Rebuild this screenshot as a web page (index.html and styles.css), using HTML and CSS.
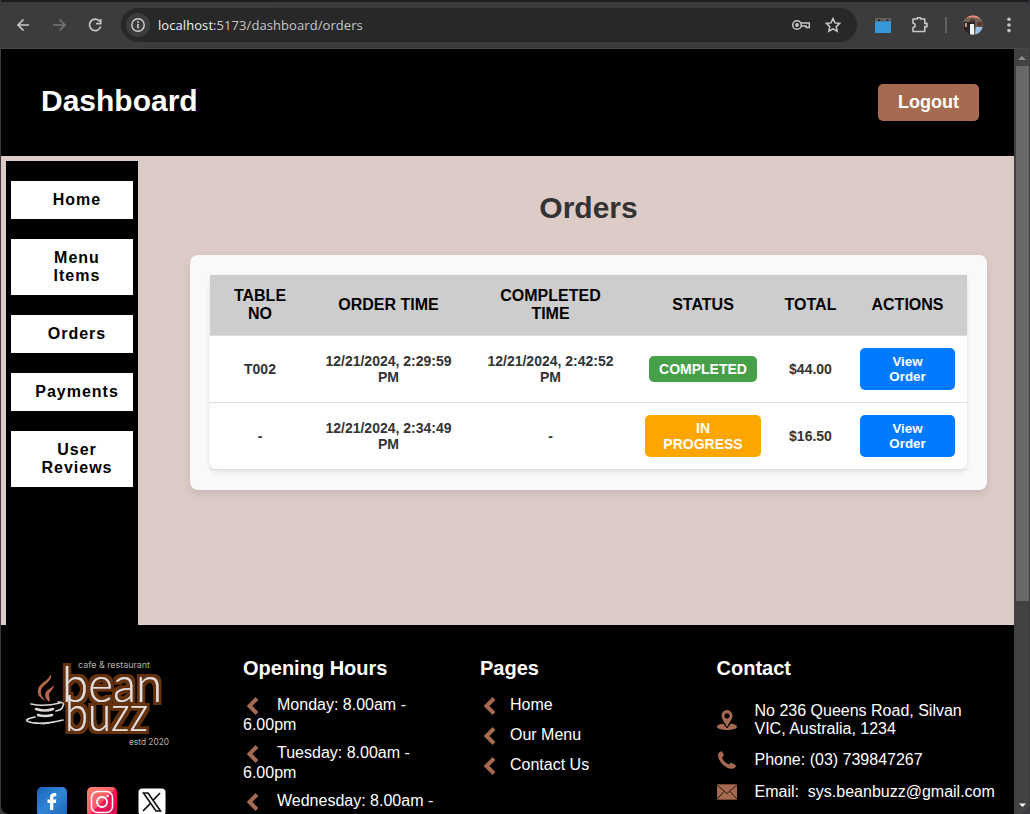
FILE: index.html
```html
<!DOCTYPE html>
<html lang="en">
<head>
<meta charset="utf-8">
<title>Dashboard - Orders</title>
<link rel="stylesheet" href="styles.css">
</head>
<body>
<div class="window">
  <div class="tabstrip"><span class="tab-edge"></span></div>
  <div class="toolbar">
    <svg class="nav-icons" width="120" height="46" viewBox="0 0 120 46" fill="none" stroke-width="1.7">
      <path d="M28 23H17M22.500 17.500L17 23l5.500 5.500" stroke="#c7c7c7"/>
      <path d="M52 23h12M58.500 17.500L64 23l-5.500 5.500" stroke="#757575"/>
      <path d="M98.800 19.500A5.700 5.700 0 1 0 99.700 24.500M99.700 17v4.600h-4.600" stroke="#c7c7c7"/>
    </svg>
    <div class="address">
      <span class="info"><svg width="24" height="24" viewBox="0 0 24 24" fill="none" stroke="#d0d0d0" stroke-width="1.4"><circle cx="12" cy="12" r="6.200"/><path d="M12 11v4.300M12 8.300v1.700" stroke-width="1.600"/></svg></span>
      <span class="url"><b>localhost</b>:5173/dashboard/orders</span>
      <svg class="address-icons" width="56" height="24" viewBox="0 0 56 24" fill="none" stroke="#c7c7c7" stroke-width="1.500">
        <circle cx="9" cy="12" r="4.300"/><circle cx="9" cy="12" r="1.900" fill="#c7c7c7" stroke="none"/><path d="M12.700 10h8.600v4.600h-3.200v-1.700h-5"/>
        <path d="M45 5.600l2 4.300 4.700.5-3.500 3.200 1 4.600-4.200-2.400-4.200 2.400 1-4.600-3.500-3.200 4.700-.5z" stroke-width="1.500"/>
      </svg>
    </div>
    <svg class="ext-icons" width="172" height="46" viewBox="0 0 172 46">
      <path fill="#606060" d="M18 16h16v5H18z"/><path fill="#3498db" d="M18 19.600h16V31H18z"/><path fill="#222" d="M21 17.500h2v1.500h-2zM29.500 17.500h2v1.500h-2z"/>
      <path d="M56 17h4.300v-1.200h3.300V17h4.200v4.400H70v3.200h-2.200V29.500H56v-4a2 2 0 0 0 0-4.300z" fill="none" stroke="#c7c7c7" stroke-width="1.600" stroke-linejoin="round"/>
      <path fill="#606060" d="M88 15h2v16h-2z"/>
      <clipPath id="avatar"><circle cx="116" cy="23" r="9.800"/></clipPath>
      <g clip-path="url(#avatar)"><path fill="#eb8c7c" d="M106 13h20v7h-20z"/><path fill="#706252" d="M106 17q10-4 20 1v15h-20z"/><path fill="#252326" d="M107 20h7l-1 13h-7zM113 18h5v7h-5z"/><circle cx="115.500" cy="18.500" r="2" fill="#553b34"/><circle cx="122.500" cy="22" r="2.600" fill="#593931"/><path fill="#edf1f4" d="M113 22h4v11h-4z"/><path fill="#98bce8" d="M119 25h7v8h-8z"/><path fill="#c99376" d="M108 21h2v4h-2z"/></g>
      <g fill="#c7c7c7"><circle cx="152" cy="17.300" r="1.800"/><circle cx="152" cy="23" r="1.800"/><circle cx="152" cy="28.600" r="1.800"/></g>
    </svg>
  </div>
  <div class="viewport">
    <div class="page">
      <header class="header"><h1>Dashboard</h1><button class="logout">Logout</button></header>
      <div class="body">
        <nav class="sidebar">
          <a>Home</a><a>Menu<br>Items</a><a>Orders</a><a>Payments</a><a>User<br>Reviews</a>
        </nav>
        <main class="main">
          <h2>Orders</h2>
          <section class="card">
            <table>
              <colgroup><col class="c-no"><col class="c-order"><col class="c-done"><col class="c-status"><col class="c-total"><col class="c-action"></colgroup>
              <thead><tr><th>TABLE<br>NO</th><th>ORDER TIME</th><th>COMPLETED<br>TIME</th><th>STATUS</th><th>TOTAL</th><th>ACTIONS</th></tr></thead>
              <tbody>
                <tr><td>T002</td><td>12/21/2024, 2:29:59<br>PM</td><td>12/21/2024, 2:42:52<br>PM</td><td><span class="badge done">COMPLETED</span></td><td>$44.00</td><td><button class="view">View<br>Order</button></td></tr>
                <tr><td>-</td><td>12/21/2024, 2:34:49<br>PM</td><td>-</td><td><span class="badge progress">IN<br>PROGRESS</span></td><td>$16.50</td><td><button class="view">View<br>Order</button></td></tr>
              </tbody>
            </table>
          </section>
        </main>
      </div>
      <footer class="footer">
        <div class="brand">
          <svg class="logo" width="160" height="100" viewBox="20 653 160 100">
            <defs><filter id="glow" filterUnits="userSpaceOnUse" x="55" y="650" width="120" height="95"><feMorphology in="SourceAlpha" operator="dilate" radius="2.600" result="wide"/><feGaussianBlur in="wide" stdDeviation=".5" result="soft"/><feFlood flood-color="#65330f"/><feComposite in2="soft" operator="in" result="edge"/><feMerge><feMergeNode in="edge"/><feMergeNode in="SourceGraphic"/></feMerge></filter></defs>
            <text class="logo-small" x="78" y="668" textLength="72" lengthAdjust="spacingAndGlyphs">cafe &amp; restaurant</text>
            <g class="logo-word" filter="url(#glow)"><text x="62" y="702" textLength="100" lengthAdjust="spacingAndGlyphs">bean</text><text x="65" y="731" textLength="83" lengthAdjust="spacingAndGlyphs">buzz</text></g>
            <text class="logo-small" x="129" y="745" textLength="40" lengthAdjust="spacingAndGlyphs">estd 2020</text>
            <g fill="#b9694b"><path d="M51 674c2 7-8 10-10 16-1 5 2 8 5 11-7-3-10-8-7-14 3-5 10-7 12-13z"/><path d="M54 685c0 5-5 6-5 10 0 3 2 4 0 7-3-3-5-6-3-10 2-3 6-4 8-7z"/></g>
            <g fill="none" stroke="#ddd8d4" stroke-linecap="round"><path d="M31 704q13 3 29-1" stroke-width="1.600"/><path d="M58 702q7 0 5 4-1 4-7 5" stroke-width="1.600"/><path d="M36 709q9 3 17 0M38 715q7 2 14 0" stroke-width="2.600"/><path d="M35 717q-10 2-8 4 10 5 36-1" stroke-width="1.700"/><path d="M36 723q9 2 18-1" stroke-width="1.200"/></g>
          </svg>
          <div class="socials">
            <svg width="30" height="30" viewBox="0 0 30 30"><defs><linearGradient id="fb" x2="1" y2="1"><stop stop-color="#1765bc"/><stop offset=".5" stop-color="#3384d5"/><stop offset="1" stop-color="#1c65b8"/></linearGradient></defs><rect width="30" height="30" rx="5" fill="url(#fb)"/><path fill="#fff" d="M13 23v-7h-2.500v-3.500H13v-2c0-3 1.600-4.500 4.300-4.500h2v3.300h-1.500c-1.200 0-1.500.6-1.500 1.600v1.600h3l-.5 3.500h-2.500v7z"/></svg>
            <svg width="30" height="30" viewBox="0 0 30 30"><defs><linearGradient id="ig" x1="0" y1="0" x2="1" y2="1"><stop stop-color="#ff8370"/><stop offset=".49" stop-color="#ff5969"/><stop offset=".51" stop-color="#f51456"/><stop offset="1" stop-color="#d70a53"/></linearGradient></defs><rect width="30" height="30" rx="5" fill="url(#ig)"/><g fill="none" stroke="#fff" stroke-width="1.500"><rect x="4.500" y="4.500" width="21" height="21" rx="6"/><circle cx="15" cy="15" r="5" stroke-width="1.900"/></g><circle cx="20.700" cy="9" r="1.200" fill="#fff"/></svg>
            <svg width="30" height="30" viewBox="0 0 30 30"><rect x="1.500" y="1.500" width="27" height="27" rx="4" fill="#fff"/><path d="M6.500 6H11L23.500 24H19z" fill="#fff" stroke="#111" stroke-width="1.600"/><path d="M23 6l-7 7.500M13.500 16.300L6 24" stroke="#111" stroke-width="1.700"/></svg>
          </div>
        </div>
        <div class="hours"><h3>Opening Hours</h3>
          <p><svg class="chev" width="14" height="18" viewBox="0 0 14 18"><path d="M11 1.500L3.500 9l7.500 7.500"/></svg>Monday: 8.00am -<br>6.00pm</p>
          <p><svg class="chev" width="14" height="18" viewBox="0 0 14 18"><path d="M11 1.500L3.500 9l7.500 7.500"/></svg>Tuesday: 8.00am -<br>6.00pm</p>
          <p><svg class="chev" width="14" height="18" viewBox="0 0 14 18"><path d="M11 1.500L3.500 9l7.500 7.500"/></svg>Wednesday: 8.00am -</p>
        </div>
        <div class="links"><h3>Pages</h3>
          <a><svg class="chev" width="14" height="18" viewBox="0 0 14 18"><path d="M11 1.500L3.500 9l7.500 7.500"/></svg>Home</a>
          <a><svg class="chev" width="14" height="18" viewBox="0 0 14 18"><path d="M11 1.500L3.500 9l7.500 7.500"/></svg>Our Menu</a>
          <a><svg class="chev" width="14" height="18" viewBox="0 0 14 18"><path d="M11 1.500L3.500 9l7.500 7.500"/></svg>Contact Us</a>
        </div>
        <div class="contact"><h3>Contact</h3>
          <div class="row address-row"><svg width="20" height="20" viewBox="0 0 20 20" fill="#a66a50"><path d="M4 14l2.500-.6L10 18l3.500-4.600C18 14 20 15.300 20 16.700 20 18.600 15.500 20 10 20S0 18.600 0 16.700C0 15.500 1.500 14.500 4 14z"/><path fill-rule="evenodd" d="M10 0a5.500 5.500 0 0 1 5.500 5.600C15.500 9 12 13 10 17.500 8 13 4.500 9 4.500 5.600A5.500 5.500 0 0 1 10 0zm0 3.200a2.600 2.600 0 1 0 0 5.200 2.600 2.600 0 0 0 0-5.200z"/><path d="M5.800 12.500L10 18l4.200-5.500" fill="none" stroke="#000" stroke-width=".8"/></svg><span>No 236 Queens Road, Silvan<br>VIC, Australia, 1234</span></div>
          <div class="row"><svg width="20" height="20" viewBox="0 0 20 20" fill="#a66a50"><path d="M2 2.500L5 1l2 4.500-2 2c1 3 4 6 7 7l2-2 4.800 2.800c.5 1.500-1.300 3.200-3.300 3.500C8 19 1 11 1 5c0-1 .3-2 1-2.500z"/></svg><span>Phone: (03) 739847267</span></div>
          <div class="row"><svg width="20" height="16" viewBox="0 0 20 16"><path fill="#a66a50" d="M0 .3h20v15.400H0z"/><path d="M0 1l10 8.500L20 1M0 15l7-7.500M20 15l-7-7.500" fill="none" stroke="#211510"/></svg><span>Email:&nbsp; sys.beanbuzz@gmail.com</span></div>
        </div>
      </footer>
    </div>
    <div class="scrollbar"><svg width="15" height="17" viewBox="0 0 15 17"><path fill="#8c8c8c" d="M8 7l4 4H4z"/></svg><div class="thumb"></div><svg width="15" height="17" viewBox="0 0 15 17"><path fill="#fff" d="M5 6.500h7l-3.500 3.500z"/></svg></div>
  </div>
</div>
</body>
</html>
```
FILE: styles.css
```css
* { box-sizing: border-box; }
body { margin: 0; background: #3a3b3e; font-family: "Liberation Sans", Arial, sans-serif; }
h1, h2, h3, p { margin: 0; }
svg { display: block; flex: none; }
button { border: 0; font-family: inherit; font-weight: bold; color: #fff; }
.window { width: 1030px; height: 814px; padding: 0 1px; overflow: hidden; display: flex; flex-direction: column; }
.tabstrip { height: 2px; flex: none; background: #202020; display: flex; }
.tab-edge { width: 274px; background: #1d1d1d; }
.toolbar { height: 47px; flex: none; display: flex; align-items: flex-start; background: #3c3c3c; border-bottom: 1px solid #4a4a4a; border-radius: 7px 7px 0 0; }
.address { width: 736px; flex: none; height: 34px; margin-top: 6px; padding: 0 13px 0 5px; border-radius: 17px; background: #282828; display: flex; align-items: center; }
.info { width: 24px; height: 24px; border-radius: 50%; background: #3c3c3c; }
.url { margin-left: 8px; font: 13px/20px "Open Sans", "Noto Sans", sans-serif; letter-spacing: .07px; color: #c7c7c7; white-space: nowrap; }
.url b { font-weight: normal; color: #eee; }
.address-icons { margin-left: auto; }
.viewport { height: 765px; display: flex; background: #000; border-radius: 0 0 7px 7px; overflow: hidden; }
.page { width: 1013px; height: 765px; overflow: hidden; background: #ddcbc8; }
.header { height: 107px; padding: 0 35px 0 40px; background: #000; display: flex; justify-content: space-between; align-items: center; }
.header h1 { font-size: 30px; line-height: 34px; color: #fff; margin-bottom: 3px; }
.logout { width: 101px; height: 37px; font-size: 18px; border-radius: 5px; background: #a66a50; padding: 0; }
.body { height: 469px; display: flex; }
.sidebar { width: 132px; margin: 5px 0 0 5px; padding: 20px 5px 0; background: #000; display: flex; flex-direction: column; gap: 20px; }
.sidebar a { padding: 10px 0 10px 10px; background: #fff; color: #000; font-weight: bold; font-size: 16px; line-height: 18px; letter-spacing: 1px; text-align: center; }
.main { width: 797px; margin-left: 52px; padding-top: 34px; }
.main h2 { font-size: 30px; line-height: 35px; color: #333; text-align: center; margin-bottom: 30px; }
.card { height: 235px; padding: 20px; background: #f9f9f9; border-radius: 8px; box-shadow: 0 4px 8px rgba(0,0,0,.1); }
table { width: 757px; table-layout: fixed; border-collapse: separate; border-spacing: 0; background: #fff; border-radius: 8px; box-shadow: 0 2px 5px rgba(0,0,0,.1); }
.c-no { width: 100px; }
.c-order { width: 157px; }
.c-done { width: 167px; }
.c-status { width: 138px; }
.c-total { width: 76px; }
.c-action { width: 119px; }
th, td { padding: 12px 0; text-align: center; vertical-align: middle; border-bottom: 1px solid #ddd; font-weight: bold; }
th { height: 61px; font-size: 16px; line-height: 18px; background: #cdcdcd; color: #000; white-space: nowrap; }
th:nth-child(5), td:nth-child(5) { padding-left: 1px; }
td { height: 67px; font-size: 14px; line-height: 16px; color: #333; white-space: nowrap; }
.badge { display: block; width: 108px; margin: 0 auto; padding: 5px 0; border-radius: 5px; color: #fff; }
.done { background: #45a049; }
.progress { width: 116px; background: #ffa500; }
.view { display: block; width: 95px; height: 42px; margin: 0 auto; padding: 0; border-radius: 5px; background: #007bff; font-size: 13.333px; line-height: 15px; }
.footer { height: 189px; background: #000; color: #fff; font-size: 16px; display: flex; overflow: hidden; }
.footer h3 { font-size: 20px; line-height: 24px; margin-bottom: 15px; }
.brand { width: 242px; flex: none; padding: 28px 0 0 19px; }
.logo-small { font: 8.500px Inter, sans-serif; fill: #b5b0ae; }
.logo-word { font: 300 49px Lato, sans-serif; fill: #e6dedb; }
.socials { display: flex; gap: 20px; margin: 34px 0 0 17px; }
.hours { width: 237px; padding-top: 31px; flex: none; }
.hours p { line-height: 20px; margin-bottom: 8px; }
.chev { display: inline-block; fill: none; stroke: #a66a50; stroke-width: 4px; }
.hours .chev { height: 18px; margin: 0 17px -3px 3px; vertical-align: -2px; }
.links { width: 236px; padding-top: 31px; flex: none; }
.links a { height: 30px; display: flex; align-items: flex-start; gap: 13px; line-height: 20px; }
.links .chev { margin: 2px 0 0 3px; }
.contact { padding-top: 31px; margin-left: .5px; white-space: nowrap; }
.row { height: 32px; display: flex; align-items: center; gap: 18px; line-height: 18px; }
.address-row { height: 50px; align-items: flex-start; padding-top: 8px; margin-top: -1px; }
.address-row svg { margin-top: 8px; }
.row span { white-space: nowrap; }
.scrollbar { width: 15px; background: #424242; display: flex; flex-direction: column; }
.thumb { width: 13px; height: 535px; margin: 0 0 auto 2px; background: #686868; }
```
